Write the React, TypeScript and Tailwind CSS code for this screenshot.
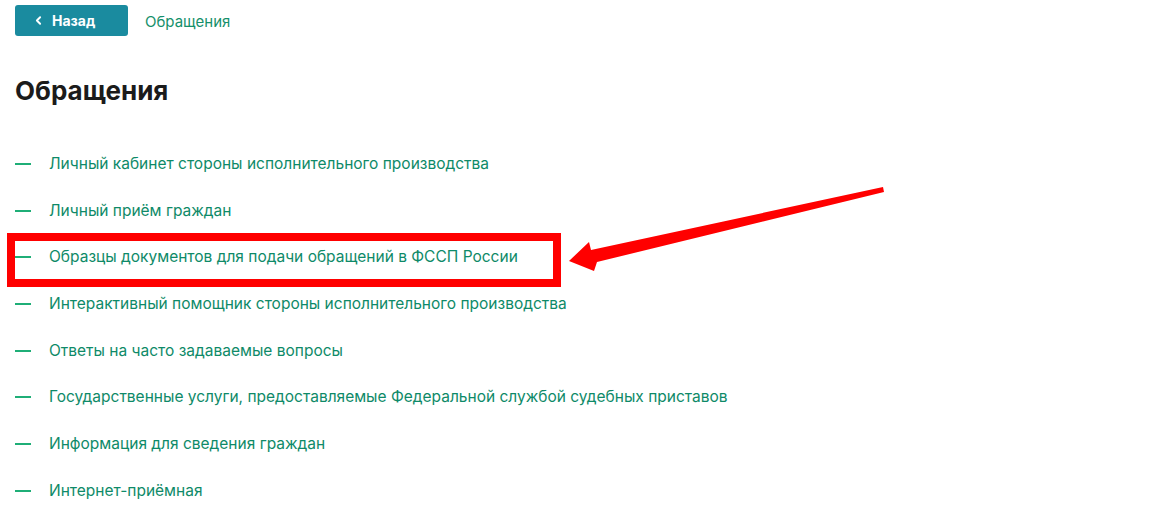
import { ChevronLeft } from "lucide-react";

const items = [
  "Личный кабинет стороны исполнительного производства",
  "Личный приём граждан",
  "Образцы документов для подачи обращений в ФССП России",
  "Интерактивный помощник стороны исполнительного производства",
  "Ответы на часто задаваемые вопросы",
  "Государственные услуги, предоставляемые Федеральной службой судебных приставов",
  "Информация для сведения граждан",
  "Интернет-приёмная",
];

export default function App() {
  return (
    <div
      className="relative w-[1151px] h-[505px] overflow-hidden bg-white px-[15px] pt-[5px]"
      style={{ fontFamily: "Inter, 'Liberation Sans', sans-serif" }}
    >
      <div className="flex items-center gap-[17px]">
        <button className="flex h-[31px] w-[113px] items-center gap-[7px] rounded-[3px] bg-[#1a8b9f] pl-[17px] text-[14px] font-bold text-white">
          <ChevronLeft className="h-[13px] w-[13px]" strokeWidth={3.5} />
          Назад
        </button>
        <a className="mt-[3px] text-[15px] text-[#15906b]">Обращения</a>
      </div>

      <h1 className="mt-[39px] text-[26px] font-bold leading-[32px] text-[#1b1b1b]">Обращения</h1>

      <ul className="mt-[47px] flex flex-col gap-[26.7px]">
        {items.map((t) => (
          <li key={t} className="flex items-center leading-[20px]">
            <span className="h-[2px] w-[16px] bg-[#1fae77]" />
            <a className="ml-[18px] text-[15.5px] text-[#0e8a68]">{t}</a>
          </li>
        ))}
      </ul>

      {/* annotation: red frame around the third link */}
      <div className="absolute left-[7px] top-[233px] h-[54px] w-[554px] border-[8px] border-[#ff0000]" />

      {/* annotation: red arrow */}
      <svg className="absolute left-0 top-0" width="1151" height="505" viewBox="0 0 1151 505">
        <polygon
          points="569,261 589,242 591,250 883,187 884,192 597,262 594,271"
          fill="#ff0000"
        />
      </svg>
    </div>
  );
}
